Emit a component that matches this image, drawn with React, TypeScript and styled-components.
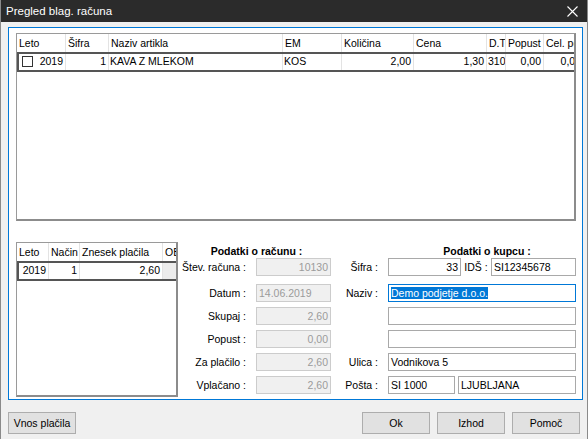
import styled, { createGlobalStyle } from "styled-components";

const GlobalStyle = createGlobalStyle`
  html, body {
    margin: 0;
    padding: 0;
    background: #f0f0f0;
  }
`;

interface Column {
  title: string;
  width: number;
  align?: "left" | "right";
}

const itemColumns: Column[] = [
  { title: "Leto", width: 49, align: "right" },
  { title: "Šifra", width: 43, align: "right" },
  { title: "Naziv artikla", width: 174 },
  { title: "EM", width: 59 },
  { title: "Količina", width: 72, align: "right" },
  { title: "Cena", width: 73, align: "right" },
  { title: "D.T", width: 19 },
  { title: "Popust", width: 38, align: "right" },
  { title: "Cel. popust", width: 40, align: "right" },
];

const itemRow = ["2019", "1", "KAVA Z MLEKOM", "KOS", "2,00", "1,30", "310", "0,00", "0,00"];

const paymentColumns: Column[] = [
  { title: "Leto", width: 32, align: "right" },
  { title: "Način", width: 31, align: "right" },
  { title: "Znesek plačila", width: 83, align: "right" },
  { title: "OB", width: 30 },
];

const paymentRow = ["2019", "1", "2,60", ""];

const invoiceFields = [
  { label: "Štev. računa :", value: "10130", align: "right" as const },
  { label: "Datum :", value: "14.06.2019", align: "left" as const },
  { label: "Skupaj :", value: "2,60", align: "right" as const },
  { label: "Popust :", value: "0,00", align: "right" as const },
  { label: "Za plačilo :", value: "2,60", align: "right" as const },
  { label: "Vplačano :", value: "2,60", align: "right" as const },
];

const CloseIcon = () => (
  <svg width="11" height="11" viewBox="0 0 11 11">
    <path d="M0.5 0.5 L10.5 10.5 M10.5 0.5 L0.5 10.5" stroke="#ffffff" strokeWidth="1.1" />
  </svg>
);

const DataGrid = ({
  columns,
  row,
  width,
  height,
  withCheck,
}: {
  columns: Column[];
  row: string[];
  width: number;
  height: number;
  withCheck?: boolean;
}) => (
  <Grid $w={width} $h={height}>
    <HeaderRow>
      {columns.map((c) => (
        <HeadCell key={c.title} $w={c.width}>
          {c.title}
        </HeadCell>
      ))}
    </HeaderRow>
    <DataRow>
      {columns.map((c, i) => (
        <Cell key={c.title} $w={c.width} $align={c.align} $muted={i === columns.length - 1 && !row[i]}>
          {i === 0 && withCheck && <CheckBox />}
          {row[i]}
        </Cell>
      ))}
    </DataRow>
  </Grid>
);

export default function App() {
  return (
    <>
      <GlobalStyle />
      <Window>
        <TitleBar>
          <span>Pregled blag. računa</span>
          <CloseIcon />
        </TitleBar>
        <Body>
          <Frame>
            <DataGrid columns={itemColumns} row={itemRow} width={560} height={188} withCheck />
            <Lower>
              <DataGrid columns={paymentColumns} row={paymentRow} width={162} height={155} />
              <InvoicePanel>
                <Heading>Podatki o računu :</Heading>
                <FormRows $cols="68px 75px">
                  {invoiceFields.map((f) => (
                    <FieldRow key={f.label}>
                      <Label>{f.label}</Label>
                      <Input $disabled $align={f.align}>
                        {f.value}
                      </Input>
                    </FieldRow>
                  ))}
                </FormRows>
              </InvoicePanel>
              <BuyerPanel>
                <Heading $offset={58}>Podatki o kupcu :</Heading>
                <FormRows $cols="40px 188px">
                  <FieldRow>
                    <Label>Šifra :</Label>
                    <Split>
                      <Input $w={73} $align="right">33</Input>
                      <InlineLabel>IDŠ :</InlineLabel>
                      <Input $w={85}>SI12345678</Input>
                    </Split>
                  </FieldRow>
                  <FieldRow>
                    <Label>Naziv :</Label>
                    <Input $focused>
                      <Selected>Demo podjetje d.o.o.</Selected>
                    </Input>
                  </FieldRow>
                  <FieldRow>
                    <span />
                    <Input />
                  </FieldRow>
                  <FieldRow>
                    <span />
                    <Input />
                  </FieldRow>
                  <FieldRow>
                    <Label>Ulica :</Label>
                    <Input>Vodnikova 5</Input>
                  </FieldRow>
                  <FieldRow>
                    <Label>Pošta :</Label>
                    <Split $gap={3}>
                      <Input $w={67}>SI 1000</Input>
                      <Input $w={118}>LJUBLJANA</Input>
                    </Split>
                  </FieldRow>
                </FormRows>
              </BuyerPanel>
            </Lower>
          </Frame>
          <ButtonBar>
            <Button>Vnos plačila</Button>
            <Spacer />
            <Button>Ok</Button>
            <Button>Izhod</Button>
            <Button>Pomoč</Button>
          </ButtonBar>
        </Body>
      </Window>
    </>
  );
}

const Window = styled.div`
  width: 588px;
  height: 439px;
  box-sizing: border-box;
  background: #f0f0f0;
  border-left: 1px solid #8a8a8a;
  border-right: 1px solid #8a8a8a;
  display: flex;
  flex-direction: column;
  font-family: "Liberation Sans", Arial, sans-serif;
  font-size: 10.5px;
  color: #000;
  overflow: hidden;
`;

const TitleBar = styled.div`
  height: 22px;
  flex: none;
  background: #2b2b2b;
  color: #ffffff;
  font-size: 11.5px;
  display: flex;
  align-items: center;
  justify-content: space-between;
  padding: 0 10px 0 6px;
  margin: 0 -1px;
`;

const Body = styled.div`
  flex: 1;
  display: flex;
  flex-direction: column;
  padding: 5px 4px 0 7px;
`;

const Frame = styled.div`
  height: 373px;
  box-sizing: border-box;
  border: 1px solid #0078d7;
  background: #ffffff;
  padding: 5px 6px 2px 7px;
  display: flex;
  flex-direction: column;
  gap: 21px;
`;

const Grid = styled.div<{ $w: number; $h: number }>`
  width: ${(p) => p.$w}px;
  height: ${(p) => p.$h}px;
  flex: none;
  box-sizing: border-box;
  border: 1px solid #9a9a9a;
  border-right-width: 2px;
  border-bottom-width: 2px;
  border-right-color: #8c8c8c;
  border-bottom-color: #8c8c8c;
  background: #ffffff;
  overflow: hidden;
`;

const HeaderRow = styled.div`
  display: flex;
  height: 18px;
  white-space: nowrap;
`;

const DataRow = styled.div`
  display: flex;
  height: 16px;
  white-space: nowrap;
  border: 2px solid #555555;
  border-right: none;
`;

const HeadCell = styled.div<{ $w: number }>`
  width: ${(p) => p.$w}px;
  flex: none;
  box-sizing: border-box;
  padding: 0 2px;
  line-height: 19px;
  border-right: 1px solid #e3e3e3;
  overflow: hidden;
`;

const Cell = styled.div<{ $w: number; $align?: "left" | "right"; $muted?: boolean }>`
  width: ${(p) => p.$w}px;
  flex: none;
  box-sizing: border-box;
  padding: 0 2px 0 1px;
  line-height: 15px;
  border-right: 1px solid #e3e3e3;
  overflow: hidden;
  text-align: ${(p) => p.$align ?? "left"};
  background: ${(p) => (p.$muted ? "#ececec" : "transparent")};

  &:first-child {
    width: ${(p) => p.$w - 2}px;
  }
`;

const CheckBox = styled.span`
  float: left;
  width: 11px;
  height: 11px;
  box-sizing: border-box;
  border: 1px solid #333333;
  background: #ffffff;
  margin: 2px 0 0 2px;
`;

const Lower = styled.div`
  display: flex;
  height: 155px;
`;

const InvoicePanel = styled.div`
  width: 153px;
  margin-left: 2px;
  padding-top: 2px;
`;

const BuyerPanel = styled.div`
  width: 236px;
  margin-left: 7px;
  padding-top: 2px;
`;

const Heading = styled.div<{ $offset?: number }>`
  height: 14px;
  line-height: 14px;
  font-weight: bold;
  text-align: center;
  padding-left: ${(p) => p.$offset ?? 0}px;
`;

const FormRows = styled.div<{ $cols: string }>`
  display: grid;
  grid-template-columns: ${(p) => p.$cols};
  column-gap: 8px;
  row-gap: 5px;
`;

const FieldRow = styled.div`
  display: contents;

  &:first-child > * {
    margin-bottom: 3px;
  }
`;

const Label = styled.span`
  text-align: right;
  line-height: 18px;
  white-space: nowrap;
  padding-right: 2px;
`;

const InlineLabel = styled.span`
  width: 30px;
  text-align: center;
  line-height: 18px;
`;

const Split = styled.div<{ $gap?: number }>`
  display: flex;
  gap: ${(p) => p.$gap ?? 0}px;
`;

const Input = styled.div<{
  $w?: number;
  $align?: "left" | "right";
  $disabled?: boolean;
  $focused?: boolean;
}>`
  width: ${(p) => (p.$w ? `${p.$w}px` : "auto")};
  height: 18px;
  box-sizing: border-box;
  border: 1px solid ${(p) => (p.$focused ? "#0078d7" : p.$disabled ? "#cccccc" : "#a9a9a9")};
  background: ${(p) => (p.$disabled ? "#f0f0f0" : "#ffffff")};
  color: ${(p) => (p.$disabled ? "#9b9b9b" : "#000000")};
  text-align: ${(p) => p.$align ?? "left"};
  padding: 0 2px;
  line-height: 16px;
  white-space: nowrap;
  overflow: hidden;
`;

const Selected = styled.span`
  background: #0078d7;
  color: #ffffff;
`;

const ButtonBar = styled.div`
  display: flex;
  gap: 7px;
  padding: 12px 3px 0 0;
`;

const Spacer = styled.div`
  flex: 1;
`;

const Button = styled.button`
  width: 68px;
  height: 22px;
  box-sizing: border-box;
  border: 1px solid #adadad;
  background: #e1e1e1;
  font-family: inherit;
  font-size: 10.5px;
  color: #000;
  padding: 0;
`;
